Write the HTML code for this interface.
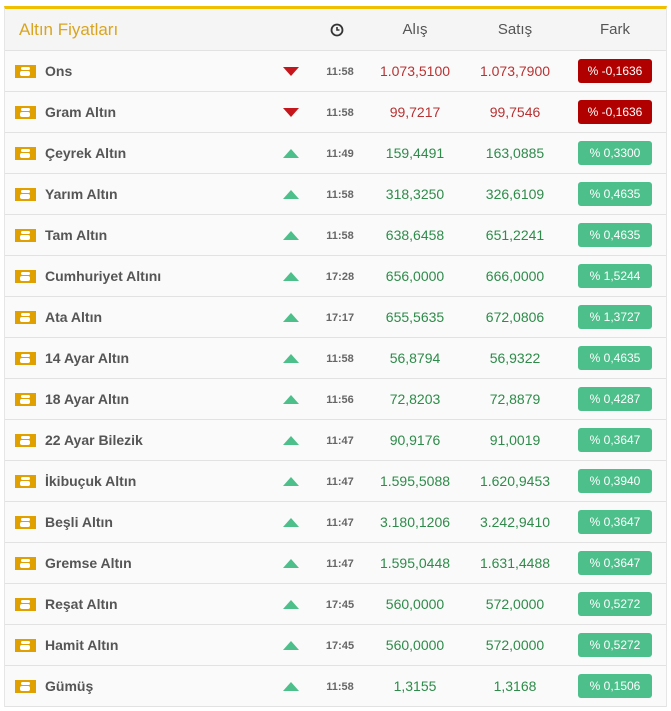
<!DOCTYPE html>
<html><head><meta charset="utf-8"><style>
body{margin:0;background:#fff;font-family:"Liberation Sans",Arial,sans-serif;}
.p{position:absolute;left:4px;top:6px;width:661px;border-top:3px solid #f0c000;border-left:1px solid #e6e6e6;border-right:1px solid #e6e6e6;}
.h{height:41px;background:#f5f5f5;border-bottom:1px solid #e2e2e2;position:relative;}
.r{height:40px;background:#fafafa;border-bottom:1px solid #e2e2e2;position:relative;}
.c{position:absolute;top:0;height:100%;display:flex;align-items:center;justify-content:center;}
.t{font-size:17px;color:#d9a520;left:14px}
.hh{font-size:15px;color:#555}
.ic{left:10px;width:21px}
.ic i{display:block;width:21px;height:13px;background:#e0a100;position:relative}
.ic i:before{content:"";position:absolute;left:6px;top:2px;width:9px;height:3px;background:#fff;border-radius:2px}
.ic i:after{content:"";position:absolute;left:5px;top:6px;width:10px;height:5px;background:#fff;border-radius:2px}
.n{left:40px;font-size:14px;font-weight:bold;color:#555}
.ar{left:276px;width:20px}
.up{width:0;height:0;border-left:8px solid transparent;border-right:8px solid transparent;border-bottom:9px solid #4cbf8a}
.dn{width:0;height:0;border-left:8px solid transparent;border-right:8px solid transparent;border-top:9px solid #c4161c}
.tm{left:314px;width:42px;font-size:11px;font-weight:bold;color:#666;padding-top:2px;box-sizing:border-box}
.a{left:360px;width:100px;font-size:14px}
.s{left:460px;width:100px;font-size:14px}
.g{color:#2e8b4a}.rd{color:#b83232}
.f{left:572px;width:76px}
.b{width:74px;height:24px;border-radius:3px;color:#fff;font-size:12px;display:flex;align-items:center;justify-content:center}
.bg{background:#4cbf8a}.br{background:#b00000}
</style></head><body>
<div class="p">
<div class="h"><div class="c t">Altın Fiyatları</div>
<div class="c hh" style="left:314px;width:36px"><svg width="14" height="14" viewBox="0 0 14 14"><circle cx="7" cy="7" r="5.5" fill="none" stroke="#333" stroke-width="1.8"/><path d="M7 4v3h2.5" fill="none" stroke="#333" stroke-width="1.6"/></svg></div>
<div class="c hh" style="left:360px;width:100px">Alış</div>
<div class="c hh" style="left:460px;width:100px">Satış</div>
<div class="c hh" style="left:572px;width:76px">Fark</div></div>
<div id="rows"></div>
</div>
<script>
var d=[["Ons",0,"11:58","1.073,5100","1.073,7900","% -0,1636"],["Gram Altın",0,"11:58","99,7217","99,7546","% -0,1636"],["Çeyrek Altın",1,"11:49","159,4491","163,0885","% 0,3300"],["Yarım Altın",1,"11:58","318,3250","326,6109","% 0,4635"],["Tam Altın",1,"11:58","638,6458","651,2241","% 0,4635"],["Cumhuriyet Altını",1,"17:28","656,0000","666,0000","% 1,5244"],["Ata Altın",1,"17:17","655,5635","672,0806","% 1,3727"],["14 Ayar Altın",1,"11:58","56,8794","56,9322","% 0,4635"],["18 Ayar Altın",1,"11:56","72,8203","72,8879","% 0,4287"],["22 Ayar Bilezik",1,"11:47","90,9176","91,0019","% 0,3647"],["İkibuçuk Altın",1,"11:47","1.595,5088","1.620,9453","% 0,3940"],["Beşli Altın",1,"11:47","3.180,1206","3.242,9410","% 0,3647"],["Gremse Altın",1,"11:47","1.595,0448","1.631,4488","% 0,3647"],["Reşat Altın",1,"17:45","560,0000","572,0000","% 0,5272"],["Hamit Altın",1,"17:45","560,0000","572,0000","% 0,5272"],["Gümüş",1,"11:58","1,3155","1,3168","% 0,1506"]];
var h="";d.forEach(function(r){var u=r[1];h+='<div class="r"><div class="c ic"><i></i></div><div class="c n">'+r[0]+'</div><div class="c ar"><div class="'+(u?'up':'dn')+'"></div></div><div class="c tm">'+r[2]+'</div><div class="c a '+(u?'g':'rd')+'">'+r[3]+'</div><div class="c s '+(u?'g':'rd')+'">'+r[4]+'</div><div class="c f"><div class="b '+(u?'bg':'br')+'">'+r[5]+'</div></div></div>';});
document.getElementById("rows").innerHTML=h;
</script>
</body></html>
